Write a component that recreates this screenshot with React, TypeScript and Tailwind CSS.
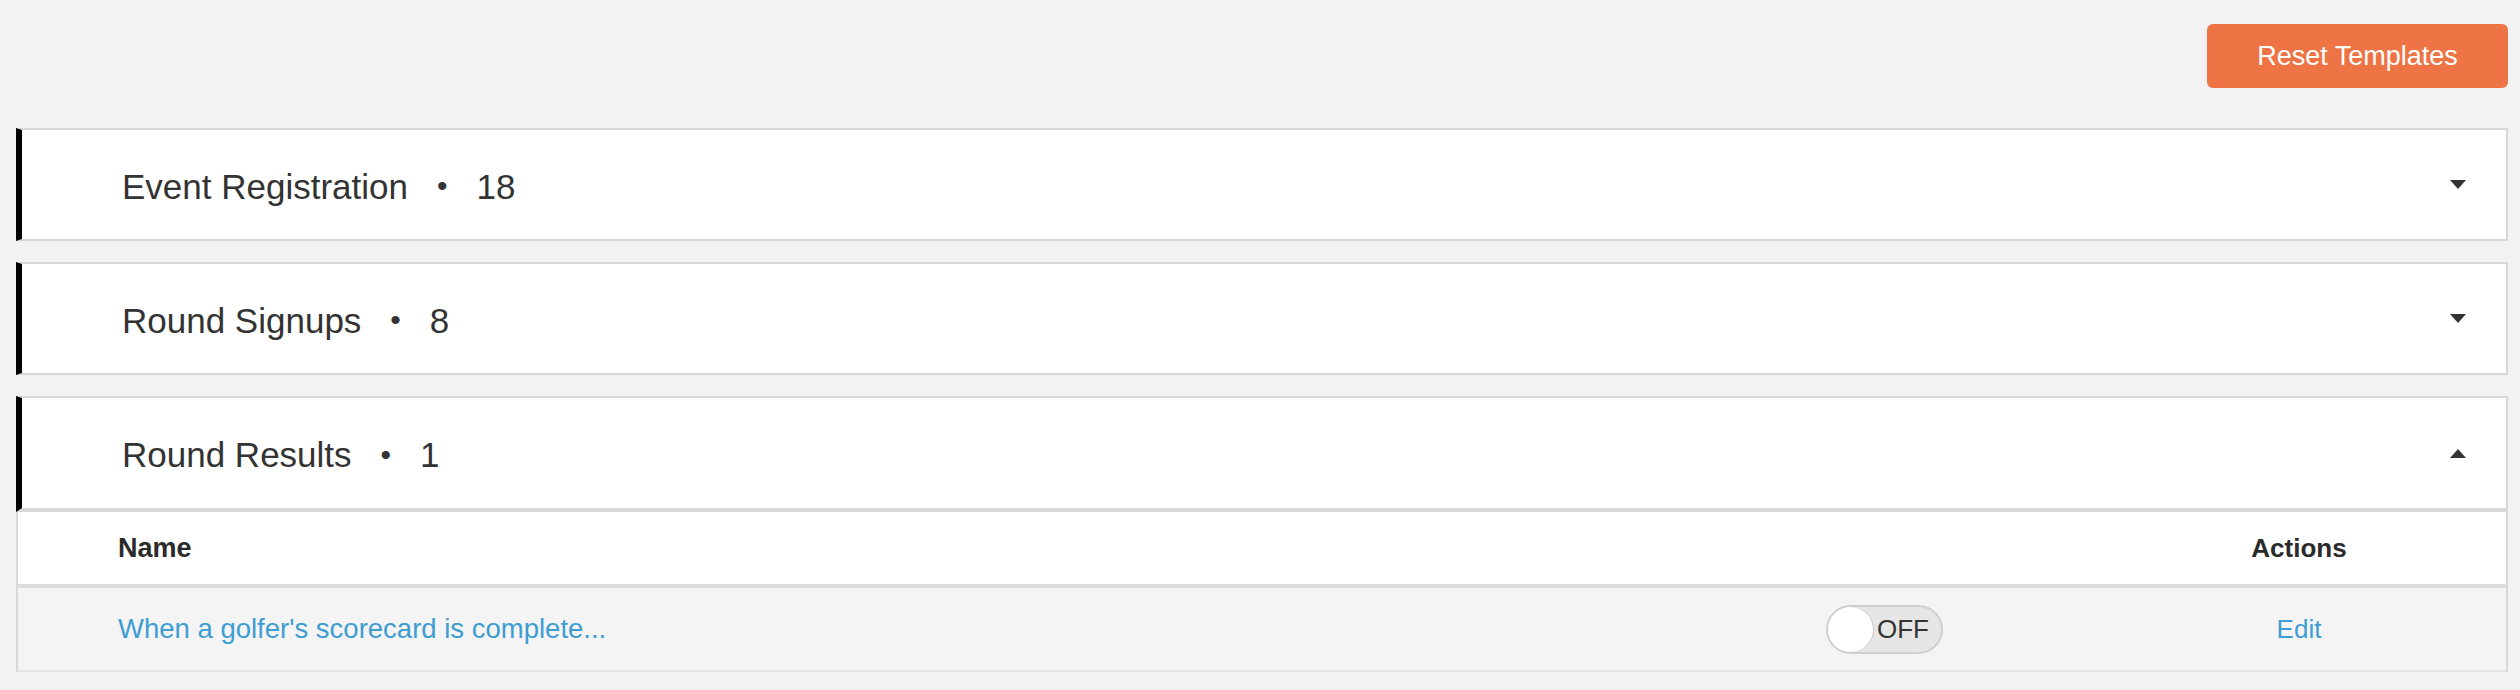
import React from "react";

function Caret({ up }: { up?: boolean }) {
  return (
    <svg width="16" height="10" viewBox="0 0 16 10" className="shrink-0">
      {up ? (
        <path d="M0 10 L8 1 L16 10 Z" fill="#333333" />
      ) : (
        <path d="M0 0 L16 0 L8 9 Z" fill="#333333" />
      )}
    </svg>
  );
}

function PanelHeader({
  title,
  count,
  open,
}: {
  title: string;
  count: number;
  open?: boolean;
}) {
  return (
    <div
      className={
        open
          ? "flex h-[116px] items-center border-t-2 border-r-2 border-b-4 border-l-[6px] border-t-[#d8d8d8] border-r-[#d8d8d8] border-b-[#d8d8d8] border-l-black bg-white pl-[100px] pr-[40px]"
          : "flex h-[113px] items-center border-t-2 border-r-2 border-b-2 border-l-[6px] border-t-[#d8d8d8] border-r-[#d8d8d8] border-b-[#d8d8d8] border-l-black bg-white pl-[100px] pr-[40px]"
      }
    >
      <div className="flex flex-1 items-center pt-[3px] text-[35px] leading-none text-[#333333]">
        <span>{title}</span>
        <span className="mx-[29px] text-[30px]">•</span>
        <span>{count}</span>
      </div>
      <Caret up={open} />
    </div>
  );
}

function Toggle() {
  return (
    <div className="relative flex h-[49px] w-[117px] items-center rounded-full border-2 border-[#cfcfcf] bg-[#e6e6e6]">
      <div className="absolute left-0 top-0 h-[45px] w-[45px] rounded-full bg-white shadow-[1px_0_1px_rgba(0,0,0,0.12)]" />
      <span className="ml-[49px] text-[26px] leading-none text-[#333333]">OFF</span>
    </div>
  );
}

export default function App() {
  return (
    <div
      className="min-h-[690px] w-full bg-[#f2f2f2] pl-[16px] pr-[12px] pt-[24px]"
      style={{ fontFamily: '"Liberation Sans", Arial, sans-serif' }}
    >
      <div className="flex justify-end">
        <button className="flex h-[64px] w-[301px] items-center justify-center rounded-[6px] bg-[#ee7345] text-[27px] leading-none text-white">
          Reset Templates
        </button>
      </div>

      <div className="mt-[40px] flex flex-col gap-[21px]">
        <PanelHeader title="Event Registration" count={18} />
        <PanelHeader title="Round Signups" count={8} />
        <div className="flex flex-col">
          <PanelHeader title="Round Results" count={1} open />
          <div className="border-x-2 border-[#d8d8d8]">
            <div className="flex h-[76px] items-center border-b-4 border-[#dcdcdc] bg-white font-bold leading-none text-[#2b2b2b]">
              <div className="flex-1 pl-[100px] text-[27px]">Name</div>
              <div className="w-[266px]" />
              <div className="w-[414px] text-center text-[26px]">Actions</div>
            </div>
            <div className="flex h-[84px] items-center border-b-2 border-[#e3e3e3] bg-[#f4f4f4] leading-none">
              <div className="flex-1 pl-[100px] text-[27.5px] text-[#3e9dd1]">
                When a golfer's scorecard is complete...
              </div>
              <div className="w-[266px]">
                <Toggle />
              </div>
              <div className="w-[414px] text-center text-[26px] text-[#3e9dd1]">Edit</div>
            </div>
          </div>
        </div>
      </div>
    </div>
  );
}
